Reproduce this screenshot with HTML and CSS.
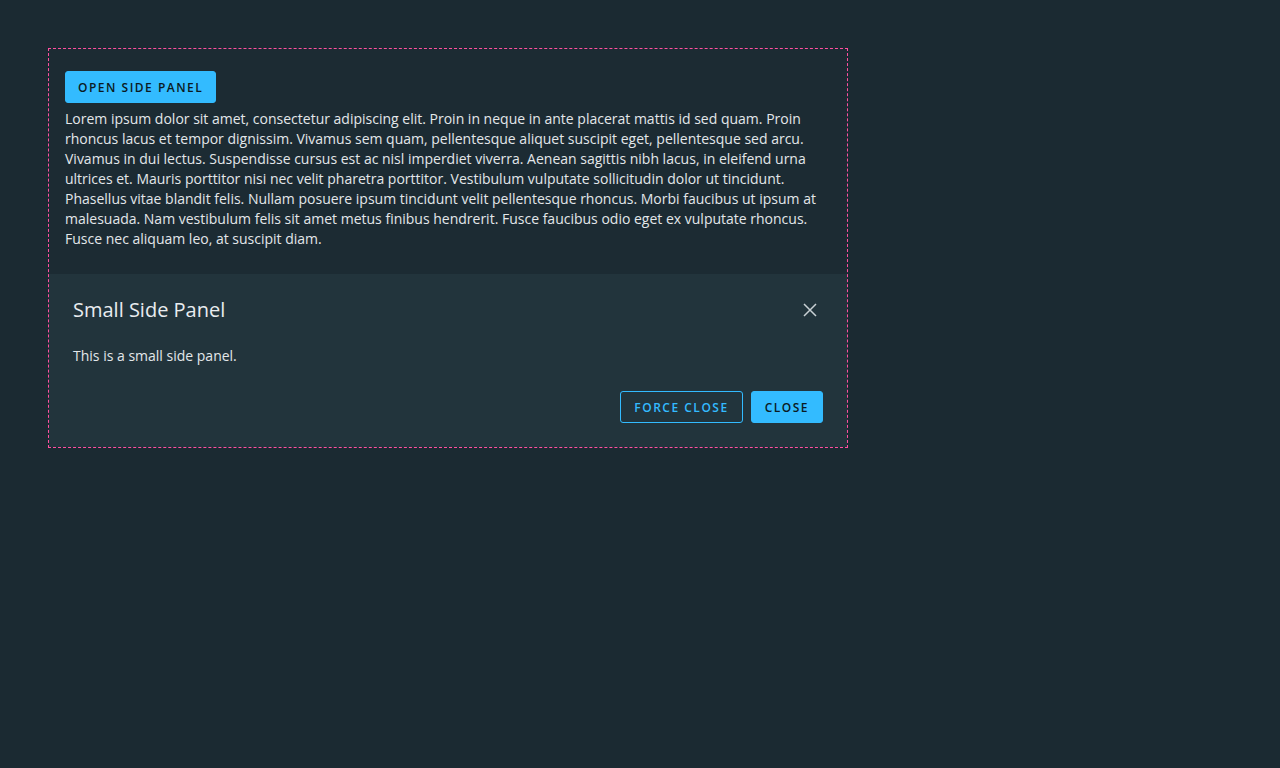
FILE: index.html
```html
<!DOCTYPE html>
<html>
<head>
<meta charset="utf-8">
<link rel="stylesheet" href="styles.css">
</head>
<body>
<div class="demo">
  <button class="btn btn-primary">Open Side Panel</button>
  <p class="lorem">Lorem ipsum dolor sit amet, consectetur adipiscing elit. Proin in neque in ante placerat mattis id sed quam. Proin rhoncus lacus et tempor dignissim. Vivamus sem quam, pellentesque aliquet suscipit eget, pellentesque sed arcu. Vivamus in dui lectus. Suspendisse cursus est ac nisl imperdiet viverra. Aenean sagittis nibh lacus, in eleifend urna ultrices et. Mauris porttitor nisi nec velit pharetra porttitor. Vestibulum vulputate sollicitudin dolor ut tincidunt. Phasellus vitae blandit felis. Nullam posuere ipsum tincidunt velit pellentesque rhoncus. Morbi faucibus ut ipsum at malesuada. Nam vestibulum felis sit amet metus finibus hendrerit. Fusce faucibus odio eget ex vulputate rhoncus. Fusce nec aliquam leo, at suscipit diam.</p>
  <div class="panel">
    <div class="panel-header">
      <h3 class="panel-title">Small Side Panel</h3>
      <button class="panel-close" aria-label="close">
        <svg width="14" height="14" viewBox="0 0 14 14"><path d="M1 1 L13 13 M13 1 L1 13" stroke="#c8d0d4" stroke-width="1.5" fill="none"/></svg>
      </button>
    </div>
    <div class="panel-body">This is a small side panel.</div>
    <div class="panel-footer">
      <button class="btn btn-outline">Force Close</button>
      <button class="btn btn-primary">Close</button>
    </div>
  </div>
</div>
</body>
</html>
```
FILE: styles.css
```css
html, body { margin: 0; padding: 0; }
body {
  background: #1b2a32;
  font-family: "Open Sans", "Noto Sans", sans-serif;
  color: #e3e7ea;
  padding: 48px;
}
.demo {
  position: relative;
  border: 1px dashed #ff4fa0;
  background: #1c2b33;
  padding: 22px 16px 0 16px;
  box-sizing: content-box;
  width: 766px;
  height: 376px;
}
.btn {
  font-family: inherit;
  font-size: 12px;
  font-weight: 600;
  letter-spacing: 1.5px;
  text-transform: uppercase;
  height: 32px;
  padding: 0 12px;
  border-radius: 3px;
  border: 1px solid transparent;
  cursor: pointer;
  box-sizing: border-box;
}
.btn-primary {
  background: #33bbff;
  color: #0b1a22;
  border-color: #33bbff;
}
.btn-outline {
  background: transparent;
  color: #33bbff;
  border-color: #33bbff;
}
.lorem {
  margin: 6px 0 0 0;
  font-size: 14px;
  line-height: 20px;
}
.panel {
  position: absolute;
  left: 0;
  right: 0;
  bottom: 0;
  height: 173px;
  background: #22343c;
  padding: 24px 24px 24px 24px;
  box-sizing: border-box;
  display: flex;
  flex-direction: column;
}
.panel-header {
  display: flex;
  align-items: center;
  justify-content: space-between;
}
.panel-title {
  margin: 0;
  font-size: 20px;
  font-weight: 400;
  line-height: 24px;
  color: #e9ecef;
}
.panel-close {
  background: none;
  border: none;
  padding: 0;
  width: 14px;
  height: 14px;
  margin-right: 6px;
  display: flex;
}
.panel-body {
  margin-top: 24px;
  font-size: 14px;
  line-height: 20px;
}
.panel-footer {
  margin-top: auto;
  display: flex;
  justify-content: flex-end;
  gap: 8px;
}
.panel-footer .btn {
  padding: 0 13px;
}
```
